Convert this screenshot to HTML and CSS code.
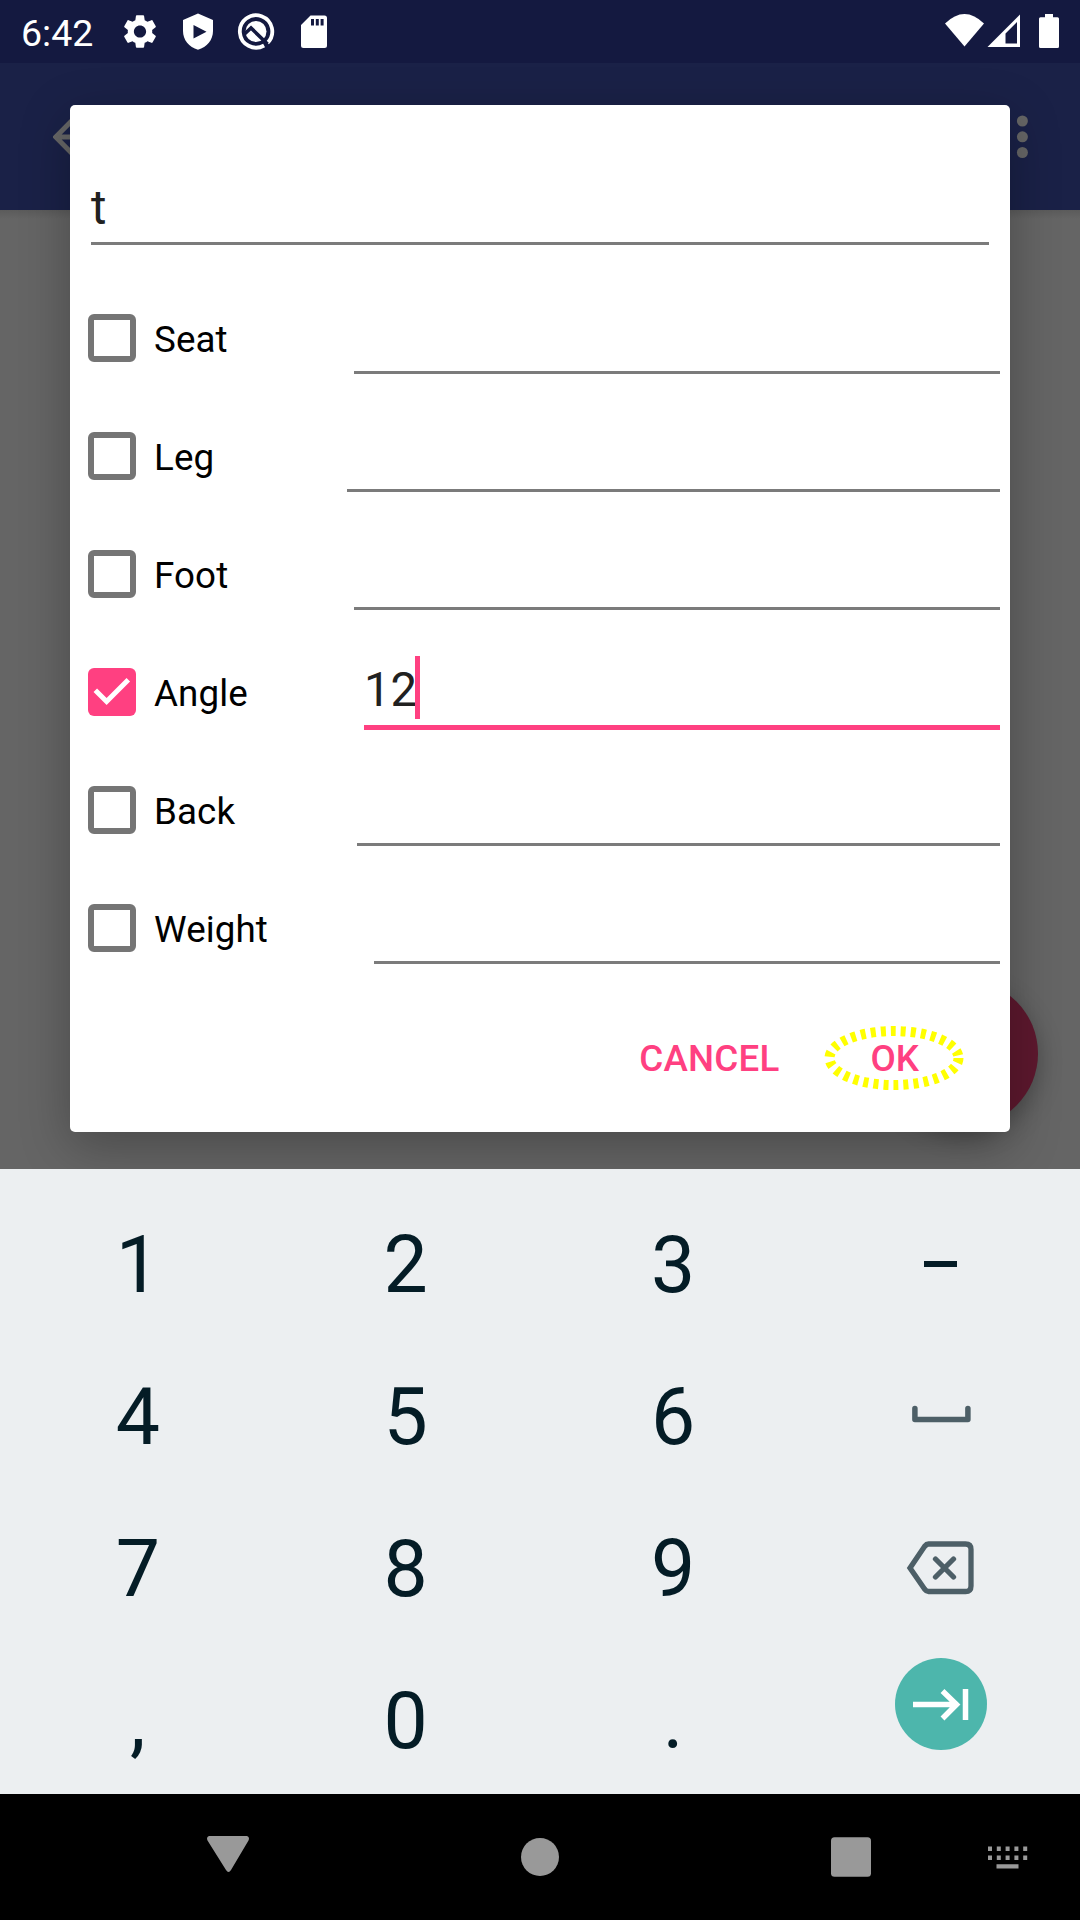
FILE: index.html
```html
<!DOCTYPE html>
<html lang="en">
<head>
<meta charset="utf-8">
<title>Settings</title>
<link rel="stylesheet" href="styles.css">
</head>
<body>
<div class="screen">
  <header class="status">
    <span class="clock">6:42</span>
    <svg class="status-left" viewBox="0 0 220 63" fill="#fff">
      <path transform="translate(-.4 11.100) scale(1.700)" d="M19.140 12.940c.04-.3.06-.61.06-.94 0-.32-.02-.64-.07-.94l2.030-1.580c.18-.14.23-.41.12-.61l-1.920-3.320c-.12-.22-.37-.29-.59-.22l-2.390.96c-.5-.38-1.030-.7-1.620-.94l-.36-2.540c-.04-.24-.24-.41-.48-.41h-3.840c-.24 0-.43.17-.47.41l-.36 2.540c-.59.24-1.130.57-1.620.94l-2.390-.96c-.22-.08-.47 0-.59.22L2.740 8.870c-.12.21-.08.47.12.61l2.030 1.580c-.05.3-.09.63-.09.94s.02.64.07.94l-2.030 1.580c-.18.14-.23.41-.12.61l1.920 3.320c.12.22.37.29.59.22l2.390-.96c.5.38 1.030.7 1.620.94l.36 2.540c.05.24.24.41.48.41h3.840c.24 0 .44-.17.47-.41l.36-2.540c.59-.24 1.130-.56 1.620-.94l2.390.96c.22.08.47 0 .59-.22l1.920-3.320c.12-.22.07-.47-.12-.61zM12 15.600c-1.980 0-3.600-1.620-3.600-3.600s1.620-3.600 3.600-3.600 3.600 1.620 3.600 3.600-1.620 3.600-3.600 3.600z"/>
      <path fill-rule="evenodd" d="M78 13.500l15 6.500v11c0 9-6 16-15 18.700C69 47 63 40 63 31V20zM73.500 25v13.500L86.500 31.700z"/>
      <g transform="translate(136 31.500)">
        <path d="M8.100 14A16.200 16.200 0 1 1 11.500 11.400" fill="none" stroke="#fff" stroke-width="3.800"/>
        <circle r="10.500"/>
        <path d="M-11.500 2.500L-5 -3.500L11.500 12.500" fill="none" stroke="#141940" stroke-width="3.600"/>
      </g>
      <path fill-rule="evenodd" d="M190.500 15.500H204.500a2.500 2.500 0 0 1 2.500 2.500v27.500a2.500 2.500 0 0 1-2.500 2.500h-21a2.500 2.500 0 0 1-2.500-2.500V25zM191 19v6.500h3V19zm4.800 0v6.500h3V19zm4.800 0v6.500h3V19z"/>
    </svg>
    <svg class="status-right" viewBox="0 0 120 63" fill="#fff">
      <path d="M5 23.500Q24.500 4.500 44 23.500L24.500 46.500z"/>
      <path fill-rule="evenodd" d="M47.500 47L80 14.500V47zM65.500 33.500V43.500H77V22z"/>
      <path d="M105 14h8v3.300h4.500q1.500 0 1.500 1.500V46.500q0 1.500-1.500 1.500h-17q-1.500 0-1.500-1.500V18.800q0-1.500 1.500-1.500H105z"/>
    </svg>
  </header>
  <div class="appbar">
    <svg class="back" viewBox="0 0 42 42"><path d="M21 2.500L2.700 21L21 39.500M3 21H40" fill="none" stroke="#666" stroke-width="5"/></svg>
    <svg class="more" viewBox="0 0 12 44" fill="#666"><circle cx="6.400" cy="6" r="5.500"/><circle cx="6.400" cy="21.800" r="5.500"/><circle cx="6.400" cy="37.500" r="5.500"/></svg>
  </div>
  <main class="page"></main>
  <div class="fab"></div>

  <section class="dialog">
    <div class="name-field">t</div>
    <div class="row seat"><i class="box"></i><span class="label">Seat</span><div class="field"></div></div>
    <div class="row leg"><i class="box"></i><span class="label">Leg</span><div class="field"></div></div>
    <div class="row foot"><i class="box"></i><span class="label">Foot</span><div class="field"></div></div>
    <div class="row angle"><i class="box checked"><svg viewBox="0 0 48 48"><path d="M7.300 22.300L18.600 33.500L40.300 11.800" fill="none" stroke="#fff" stroke-width="5"/></svg></i><span class="label">Angle</span><div class="field active"><span>12</span><i class="caret"></i></div></div>
    <div class="row back-row"><i class="box"></i><span class="label">Back</span><div class="field"></div></div>
    <div class="row weight"><i class="box"></i><span class="label">Weight</span><div class="field"></div></div>
    <div class="actions">
      <span class="cancel">CANCEL</span>
      <span class="ok">OK<svg class="ring" viewBox="0 0 140 66"><ellipse cx="70" cy="33" rx="64.500" ry="27" fill="none" stroke="#ff0" stroke-width="10" stroke-dasharray="5 5.050"/></svg></span>
    </div>
  </section>

  <section class="keyboard">
    <span>1</span><span>2</span><span>3</span><i class="minus"></i>
    <span>4</span><span>5</span><span>6</span>
    <svg class="key-icon" viewBox="0 0 80 80"><path d="M13.900 32.500V43.400H66.900V32.500" fill="none" stroke="#4d5f67" stroke-width="5.500" stroke-linecap="round" stroke-linejoin="round"/></svg>
    <span>7</span><span>8</span><span>9</span>
    <svg class="key-icon" viewBox="0 0 80 80" fill="none" stroke="#4d5f67" stroke-width="5.300"><path d="M9 40L23.500 18.500Q25.500 16 27.500 16H64.500Q70 16 70 21.500V58Q70 63.500 64.500 63.500H27.500Q25.500 63.500 23.500 61z"/><path d="M34.500 31L52.500 49M52.500 31L34.500 49" stroke-linecap="round"/></svg>
    <span>,</span><span>0</span><span>.</span>
    <svg class="enter" viewBox="0 0 92 92"><circle cx="46" cy="46" r="46" fill="#4db6ac"/><path d="M18 46.500H62M47.500 33L61.500 46.500L47.500 60.500M70.500 31V62" fill="none" stroke="#fff" stroke-width="5.500"/></svg>
  </section>

  <nav class="nav">
    <svg viewBox="0 0 1080 126" fill="#999">
      <path d="M209 42H247Q250 43 248.500 46.500L231 76Q228.500 80 226 76L207.500 46.500Q206 43 209 42z"/>
      <circle cx="540" cy="63" r="19"/>
      <rect x="831" y="43.300" width="40" height="39.500" rx="3.500"/>
      <path d="M988 52.500h4v4.500h-4zm8.800 0h4v4.500h-4zm8.800 0h4v4.500h-4zm8.800 0h4v4.500h-4zm8.800 0h4v4.500h-4zM988 61.500h4v4.500h-4zm8.800 0h4v4.500h-4zm8.800 0h4v4.500h-4zm8.800 0h4v4.500h-4zm8.800 0h4v4.500h-4zM996.500 70.300h22v4.200h-22z"/>
    </svg>
  </nav>
</div>
</body>
</html>
```
FILE: styles.css
```css
* { box-sizing: border-box; }
body { margin: 0; font-family: Roboto, sans-serif; }
.screen { position: relative; width: 1080px; height: 1920px; overflow: hidden; display: flex; flex-direction: column; background: #000; }
.status { height: 63px; flex: none; background: #141940; display: flex; align-items: center; padding: 0 20px 0 21px; color: #fff; }
.clock { width: 99px; font-size: 37.500px; line-height: 63px; padding-top: 3px; }
.status-left { width: 220px; height: 63px; overflow: visible; }
.status-right { width: 120px; height: 63px; margin-left: auto; }
.appbar { height: 147px; flex: none; background: #1a2147; display: flex; justify-content: space-between; align-items: center; padding: 0 52px 0 53px; }
.back { width: 42px; height: 42px; }
.more { width: 12px; height: 44px; }
.page { height: 959px; flex: none; background: linear-gradient(#5b5b5b, #656565 9px); }
.fab { position: absolute; left: 891px; top: 980px; width: 147px; height: 147px; border-radius: 50%; background: #5d182e; box-shadow: 0 8px 24px rgba(0,0,0,.28); }

.dialog { position: absolute; left: 70px; top: 105px; width: 940px; height: 1027px; background: #fff; border-radius: 5px; box-shadow: 0 14px 50px rgba(0,0,0,.28); display: flex; flex-direction: column; }
.name-field { height: 92px; margin: 48px 21px 34px; border-bottom: 3px solid #7b7b7b; font-size: 47.250px; line-height: 56px; padding-top: 27px; color: #212121; }
.row { height: 118px; display: flex; align-items: center; padding: 0 10px 0 18px; }
.box { width: 48px; height: 48px; border: 6px solid #757575; border-radius: 6px; flex: none; }
.box.checked { border: 0; background: #ff4081; }
.box svg { display: block; width: 48px; height: 48px; }
.label { margin-left: 18px; width: 200px; font-size: 36.750px; line-height: 44px; padding-top: 4px; color: #000; letter-spacing: .1px; }
.field { flex: 1; height: 95px; align-self: flex-start; border-bottom: 3px solid #7b7b7b; }
.leg .label { width: 193px; }
.back-row .label { width: 203px; }
.angle .label { width: 210px; }
.weight .label { width: 220px; }
.field.active { height: 97px; border-bottom: 5px solid #ff4081; display: flex; align-items: flex-start; padding-top: 23px; color: #212121; font-size: 47.250px; line-height: 69px; }
.field.active span { width: 51px; }
.caret { width: 5px; height: 63px; background: #ff4081; }
.actions { height: 126px; margin-top: 8px; padding-right: 91px; display: flex; justify-content: flex-end; align-items: center; gap: 91px; font-size: 36.750px; font-weight: 500; color: #ff4081; }
.cancel { letter-spacing: .2px; }
.ok { position: relative; }
.ring { position: absolute; left: -46px; top: -12px; width: 140px; height: 66px; }

.keyboard { position: relative; z-index: 1; height: 625px; flex: none; background: #eceff1; display: grid; grid-template-columns: repeat(4, 267.700px); grid-template-rows: repeat(4, 152px); padding: 19px 0 0 4px; align-items: center; justify-items: center; font-size: 78.750px; color: #041c26; }
.keyboard span { line-height: 92px; padding-top: 2px; }
.minus { width: 33px; height: 6px; background: #041c26; }
.key-icon { width: 80px; height: 80px; }
.enter { width: 92px; height: 92px; margin-top: -32px; }
.nav { height: 126px; flex: none; background: #000; }
.nav svg { display: block; width: 1080px; height: 126px; }
```
